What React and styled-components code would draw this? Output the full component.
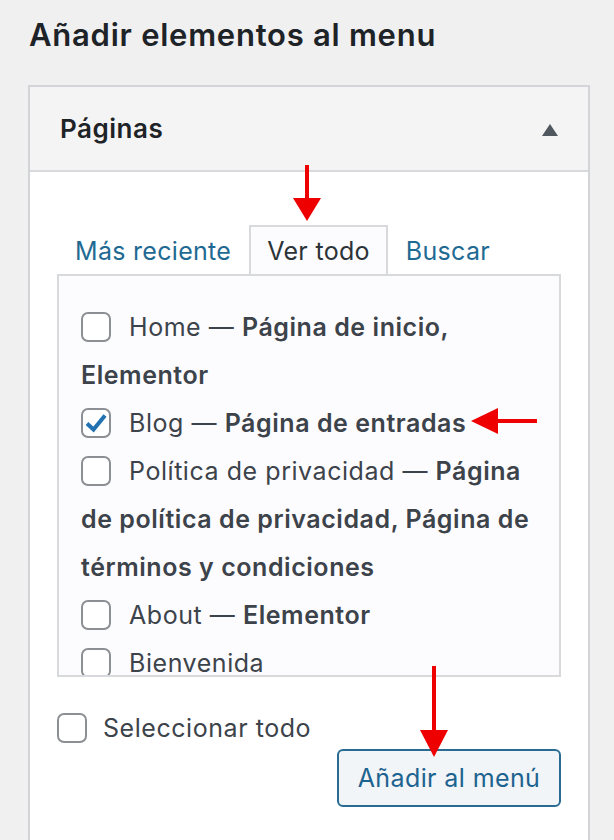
import React from "react";
import styled, { createGlobalStyle } from "styled-components";

const GlobalStyle = createGlobalStyle`
  html, body { margin: 0; padding: 0; }
  body {
    background: #f0f0f1;
    font-family: Inter, "Noto Sans", "Liberation Sans", sans-serif;
    color: #2c3338;
    overflow: hidden;
  }
`;

const Page = styled.div`
  position: relative;
  width: 614px;
  height: 840px;
  padding: 14px 24px 0 28px;
  box-sizing: border-box;
  overflow: hidden;
`;

const Title = styled.h2`
  margin: 0;
  font-size: 31px;
  line-height: 41px;
  font-weight: 600;
  color: #1d2327;
  padding-left: 1px;
  letter-spacing: 0.75px;
`;

const Panel = styled.section`
  margin-top: 30px;
  border: 2px solid #d3d4d7;
  background: #fff;
  padding-bottom: 120px;
`;

const PanelHeader = styled.div`
  height: 83px;
  display: flex;
  align-items: center;
  justify-content: space-between;
  padding: 0 30px 0 30px;
  background: #f4f4f5;
  border-bottom: 2px solid #d8d9dc;
`;

const PanelTitle = styled.h3`
  margin: 0;
  font-size: 26px;
  font-weight: 600;
  color: #1d2327;
  letter-spacing: 0.5px;
`;

const Toggle = styled.span`
  width: 0;
  height: 0;
  border-left: 8px solid transparent;
  border-right: 8px solid transparent;
  border-bottom: 12px solid #50575e;
  margin-top: 3px;
`;

const PanelBody = styled.div`
  padding: 53px 27px 0 27px;
`;

const Tabs = styled.ul`
  display: flex;
  list-style: none;
  margin: 0;
  padding: 0;
  gap: 0;
  position: relative;
  z-index: 1;
`;

const Tab = styled.li`
  height: 47px;
  padding: 0 16px;
  border: 2px solid ${(p) => (p.$active ? "#d8d9dc" : "transparent")};
  border-bottom: none;
  background: ${(p) => (p.$active ? "#fcfcfe" : "transparent")};
  margin-bottom: ${(p) => (p.$active ? "-2px" : "0")};
  color: ${(p) => (p.$active ? "#2c3338" : "#1f6a93")};
  font-size: 25px;
  line-height: 49px;
  letter-spacing: 0.3px;
  white-space: nowrap;
`;

const ListBox = styled.div`
  border: 2px solid #d8d9dc;
  background: #fcfcfe;
  overflow: hidden;
  padding: 27px 19px 0 22px;
  height: 372px;
`;

const List = styled.ul`
  list-style: none;
  margin: 0;
  padding: 0;
`;

const Item = styled.li`
  font-size: 25px;
  line-height: 48px;
  color: #3c434a;
  letter-spacing: 0.55px;
`;

const Strong = styled.strong`
  font-weight: 600;
  color: #3c434a;
`;

const Box = styled.span`
  display: inline-flex;
  align-items: center;
  justify-content: center;
  width: 30px;
  height: 30px;
  box-sizing: border-box;
  border: 2px solid #8c8f94;
  border-radius: 7px;
  background: #fff;
  vertical-align: middle;
  margin: -5px ${(p) => p.$gap}px 0 0;
`;

const Controls = styled.div`
  display: flex;
  justify-content: space-between;
  align-items: flex-start;
  margin-top: 27px;
`;

const SelectAll = styled.label`
  font-size: 25px;
  line-height: 48px;
  color: #3c434a;
  letter-spacing: 0.55px;
`;

const Button = styled.button`
  margin-top: 45px;
  width: 224px;
  height: 58px;
  border: 2px solid #2a6b93;
  border-radius: 6px;
  background: #f2f5f7;
  color: #1d6390;
  font-family: inherit;
  font-size: 25px;
  letter-spacing: 0.4px;
  padding: 0;
`;

const Overlay = styled.svg`
  position: absolute;
  left: 0;
  top: 0;
  pointer-events: none;
`;

const Check = () => (
  <svg width="24" height="22" viewBox="0 0 24 22">
    <path d="M3 11.5 L9.5 17.5 L21 3.5" fill="none" stroke="#2271b1" strokeWidth="4" strokeLinejoin="miter" />
  </svg>
);

const CheckBox = ({ checked, gap = 18 }) => (
  <Box $gap={gap}>{checked && <Check />}</Box>
);

export default function App() {
  return (
    <>
      <GlobalStyle />
      <Page>
        <Title>Añadir elementos al menu</Title>
        <Panel>
          <PanelHeader>
            <PanelTitle>Páginas</PanelTitle>
            <Toggle />
          </PanelHeader>
          <PanelBody>
            <Tabs>
              <Tab>Más reciente</Tab>
              <Tab $active>Ver todo</Tab>
              <Tab>Buscar</Tab>
            </Tabs>
            <ListBox>
              <List>
                <Item>
                  <CheckBox />Home — <Strong>Página de inicio, Elementor</Strong>
                </Item>
                <Item>
                  <CheckBox checked />Blog — <Strong>Página de entradas</Strong>
                </Item>
                <Item>
                  <CheckBox />Política de privacidad — <Strong>Página de política de privacidad, Página de términos y condiciones</Strong>
                </Item>
                <Item>
                  <CheckBox />About — <Strong>Elementor</Strong>
                </Item>
                <Item>
                  <CheckBox />Bienvenida
                </Item>
              </List>
            </ListBox>
            <Controls>
              <SelectAll>
                <CheckBox gap={16} />Seleccionar todo
              </SelectAll>
              <Button>Añadir al menú</Button>
            </Controls>
          </PanelBody>
        </Panel>
        <Overlay width="614" height="840" viewBox="0 0 614 840">
          <g fill="#ee0000" stroke="none">
            <rect x="305" y="165" width="4" height="38" />
            <polygon points="293,198 321,198 307,221" />
            <rect x="494" y="419" width="43" height="4" />
            <polygon points="498,408 498,434 471,421" />
            <rect x="432" y="666" width="4" height="68" />
            <polygon points="420,730 448,730 434,757" />
          </g>
        </Overlay>
      </Page>
    </>
  );
}
